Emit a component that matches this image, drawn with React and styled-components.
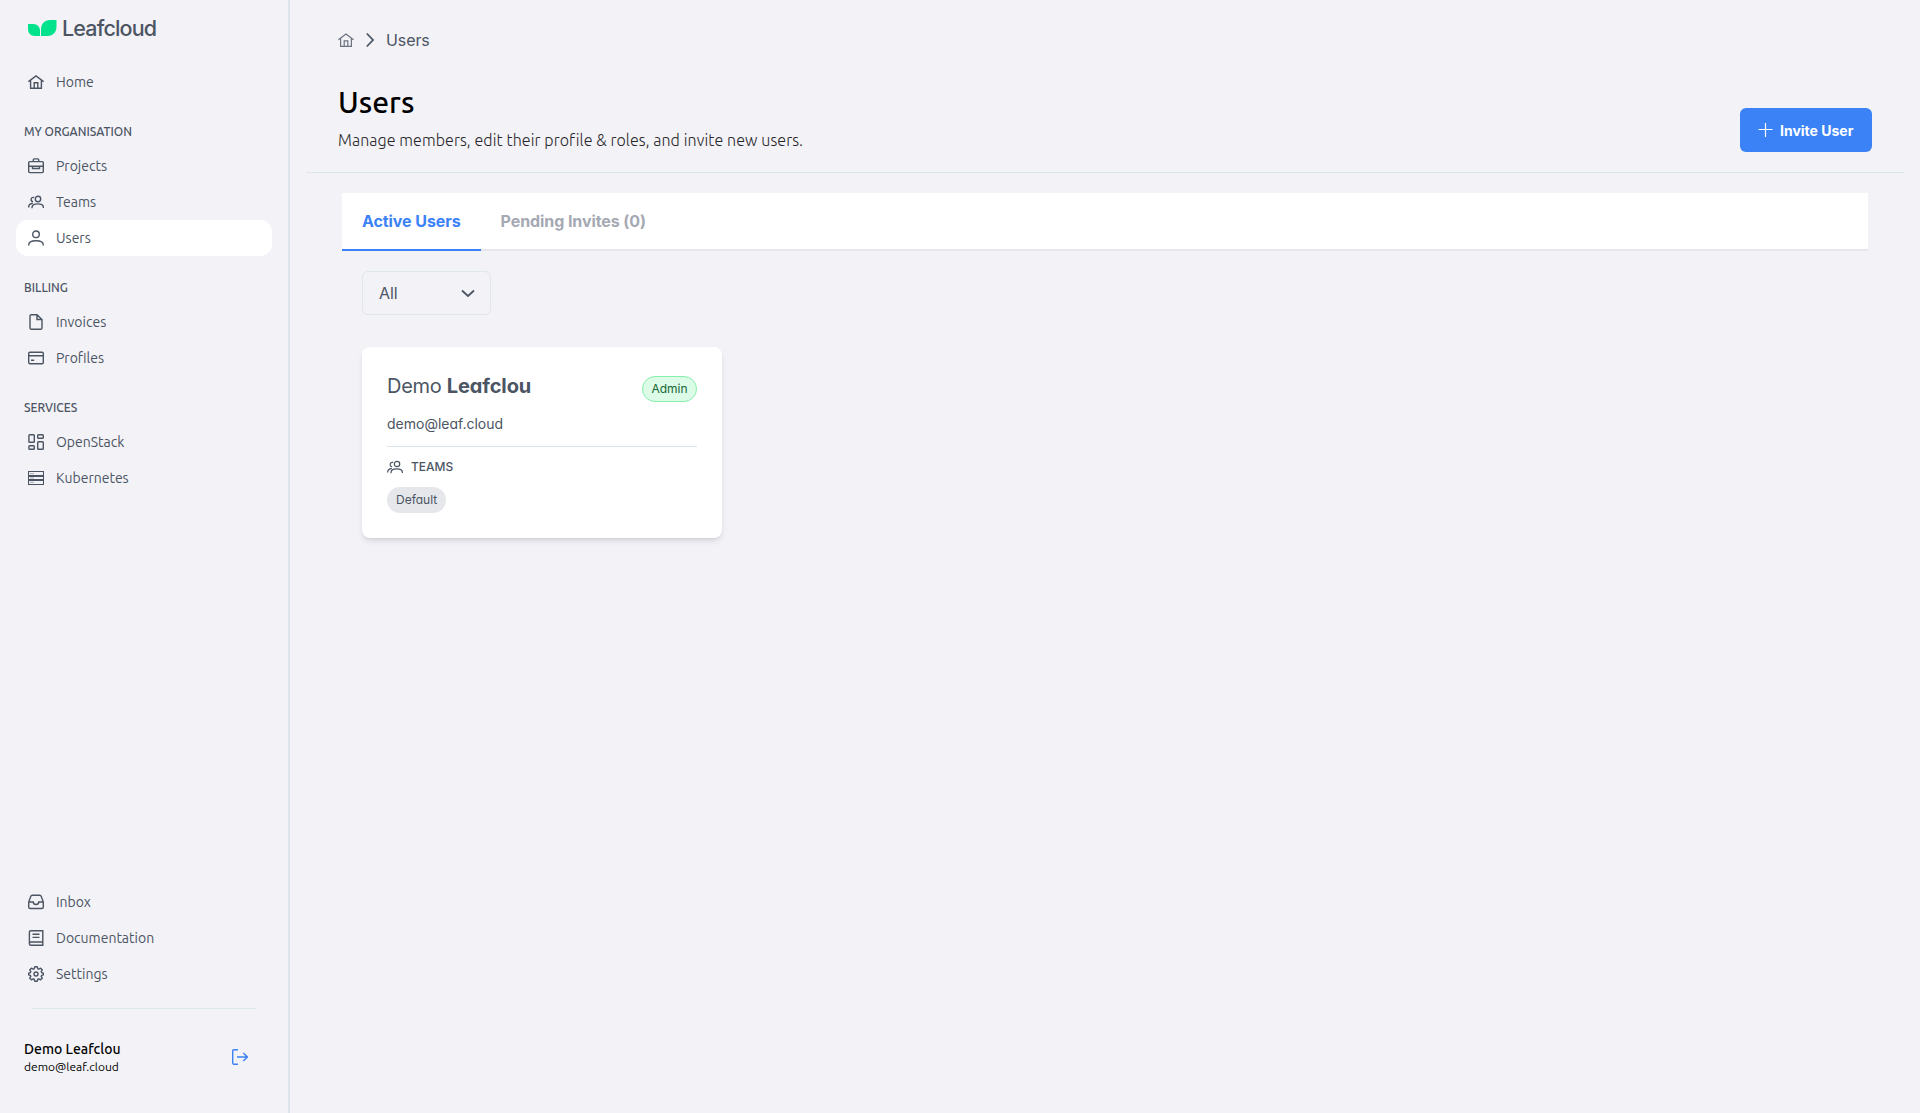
import React from 'react';
import styled, { createGlobalStyle } from 'styled-components';

const Global = createGlobalStyle`
  * { box-sizing: border-box; }
  body { margin: 0; background: #f3f2f7; }
`;

const Svg = styled.svg`
  width: 16px;
  height: 16px;
  flex: none;
  display: block;
  fill: none;
  stroke: ${(p) => p.$color || '#4b5563'};
  stroke-width: ${(p) => p.$weight || 1.4};
`;

const shapes = {
  home: (
    <>
      <path d="M.4 7.7 8 1.9l7.600 5.800M2.600 6.400v7.900h10.800V6.400M6.200 14.300V8.800h3.600v5.500" />
    </>
  ),
  projects: (
    <>
      <rect x=".7" y="3.600" width="14.600" height="11" rx="1" />
      <path d="M5.300 3.500V1.800c0-.6.3-.9.900-.9h3.600c.6 0 .9.300.9.900v1.700M.7 8.200h14.600M4.500 8.200v2.300h7V8.200" />
    </>
  ),
  teams: (
    <>
      <circle cx="10" cy="5" r="2.700" />
      <path d="M4 14.200v-.7c0-2.100 2.200-3.600 5.800-3.600s5.600 1.500 5.600 3.600v.5M6.200 3.500C4.300 3 3.100 4.100 3.100 5.400s.8 2.100 2 2.200M.6 13.500c0-2.500 1-3.800 4.200-4.200" />
    </>
  ),
  user: (
    <>
      <circle cx="8" cy="4.300" r="3.300" />
      <path d="M.8 15.500v-1c0-2.400 2.700-3.800 7.200-3.800s7.200 1.400 7.200 3.800v1" />
    </>
  ),
  file: (
    <>
      <path d="M9 .7H3.400C2.600.7 2 1.300 2 2.100v11.800c0 .8.600 1.400 1.400 1.400h9.200c.8 0 1.400-.6 1.400-1.400V5.500L9 .7v4.800h5" />
    </>
  ),
  card: (
    <>
      <rect x=".7" y="2.300" width="14.600" height="11.400" rx="1.200" />
      <path d="M.7 5.800h14.600M3 10.200h3.200" />
    </>
  ),
  grid: (
    <>
      <rect x=".9" y=".7" width="5.400" height="7.600" rx=".8" />
      <rect x="9.700" y=".7" width="5.600" height="3.600" rx=".8" />
      <rect x=".9" y="11.700" width="5.400" height="3.600" rx=".8" />
      <rect x="9.700" y="7.700" width="5.600" height="7.600" rx=".8" />
    </>
  ),
  server: (
    <>
      <path d="M.5 1.500h15v13H.5z" strokeWidth="1.100" />
      <path d="M.5 6h15M.5 10h15" strokeWidth="2" />
      <path d="M2.500 3.700h1M4.500 3.700h1M2.500 8h1M4.500 8h1M2.500 12.300h1M4.500 12.300h1" strokeWidth=".9" />
    </>
  ),
  inbox: (
    <>
      <path d="M.7 8v5c0 .9.600 1.500 1.500 1.500h11.600c.9 0 1.500-.6 1.500-1.500V8l-2-5.500c-.3-.8-.8-1.200-1.600-1.200H4.300c-.8 0-1.300.4-1.600 1.200L.7 8h4.600c0 1.500 1.100 2.500 2.700 2.500s2.700-1 2.700-2.500h4.600" />
    </>
  ),
  book: (
    <>
      <path d="M14.800 12V.7H3C2 .7 1.400 1.300 1.400 2.200v11.600c0 .9.700 1.500 1.600 1.500h11.800V12H3c-.9 0-1.600.6-1.600 1.500M4.500 4.200h7M4.500 7.400h7" />
    </>
  ),
  settings: (
    <>
      <circle cx="8" cy="8" r="2" />
      <path
        d="M6.700.8h2.600l.5 2 1 .4 1.800-1 1.600 1.600-1 1.800.4 1 1.700.6v1.600l-1.700.6-.4 1 1 1.800-1.600 1.600-1.800-1-1 .4-.5 2H6.700l-.5-2-1-.4-1.800 1-1.600-1.600 1-1.800-.4-1L.7 8.800V7.200l1.700-.6.4-1-1-1.800 1.600-1.600 1.800 1 1-.4z"
        strokeLinejoin="round"
      />
    </>
  ),
  logout: (
    <>
      <path d="M6 .7H2C1.100.7.7 1.200.7 2v12c0 .8.400 1.300 1.300 1.300h4M5 8h10.300M11.300 3.900 15.400 8l-4.100 4.100" />
    </>
  ),
  plus: <path d="M7.500 1v14M.5 7.500h14" />,
  chevronRight: <path d="M4.800 1.500 11 8l-6.200 6.500" />,
  chevronDown: <path d="M2 5.500 8 11l6-5.500" />,
};

const Icon = ({ name, ...rest }) => (
  <Svg viewBox="0 0 16 16" {...rest}>
    {shapes[name]}
  </Svg>
);

const NavItem = ({ icon, label, active }) => (
  <NavRow $active={active}>
    <Icon name={icon} />
    <NavLabel>{label}</NavLabel>
  </NavRow>
);

const sections = [
  {
    title: 'MY ORGANISATION',
    items: [
      { icon: 'projects', label: 'Projects' },
      { icon: 'teams', label: 'Teams' },
      { icon: 'user', label: 'Users', active: true },
    ],
  },
  {
    title: 'BILLING',
    items: [
      { icon: 'file', label: 'Invoices' },
      { icon: 'card', label: 'Profiles' },
    ],
  },
  {
    title: 'SERVICES',
    items: [
      { icon: 'grid', label: 'OpenStack' },
      { icon: 'server', label: 'Kubernetes' },
    ],
  },
];

const App = () => (
  <Page>
    <Global />
    <Sidebar>
      <Brand>
        <Leaf viewBox="0 0 29 16">
          <path d="M0 4h5c4.500 0 7 3 7 7v5H7c-4.500 0-7-3-7-7z" />
          <path d="M13 16V9.500C13 4 16.500 0 22 0h6.500v6.500C28.500 12 25 16 19.500 16z" />
        </Leaf>
        <BrandName>Leafcloud</BrandName>
      </Brand>
      <NavItem icon="home" label="Home" />
      {sections.map((section) => (
        <Section key={section.title}>
          <SectionTitle>{section.title}</SectionTitle>
          {section.items.map((item) => (
            <NavItem key={item.label} {...item} />
          ))}
        </Section>
      ))}
      <Bottom>
        <NavItem icon="inbox" label="Inbox" />
        <NavItem icon="book" label="Documentation" />
        <NavItem icon="settings" label="Settings" />
        <SideRule />
        <Account>
          <div>
            <AccountName>Demo Leafclou</AccountName>
            <AccountMail>demo@leaf.cloud</AccountMail>
          </div>
          <Icon name="logout" $color="#3b82f6" />
        </Account>
      </Bottom>
    </Sidebar>
    <Main>
      <Breadcrumb>
        <Icon name="home" $color="#6b7280" $weight={1.2} />
        <Icon name="chevronRight" $weight={1.8} />
        <Crumb>Users</Crumb>
      </Breadcrumb>
      <Header>
        <div>
          <Title>Users</Title>
          <Subtitle>Manage members, edit their profile &amp; roles, and invite new users.</Subtitle>
        </div>
        <InviteButton>
          <Icon name="plus" $color="#fff" $weight={1.2} />
          Invite User
        </InviteButton>
      </Header>
      <Tabs>
        <Tab $active>Active Users</Tab>
        <Tab>Pending Invites (0)</Tab>
      </Tabs>
      <Content>
        <Select>
          All
          <Icon name="chevronDown" $weight={1.8} />
        </Select>
        <Card>
          <CardTop>
            <Name>
              Demo <b>Leafclou</b>
            </Name>
            <Role>Admin</Role>
          </CardTop>
          <Mail>demo@leaf.cloud</Mail>
          <TeamsHeading>
            <Icon name="teams" $weight={1.2} />
            TEAMS
          </TeamsHeading>
          <Team>Default</Team>
        </Card>
      </Content>
    </Main>
  </Page>
);

export default App;

// Styled Components
const Page = styled.div`
  display: flex;
  height: 1113px;
  font-family: 'Inter', sans-serif;
  color: #4b5563;
`;

const Sidebar = styled.aside`
  display: flex;
  flex-direction: column;
  width: 290px;
  flex: none;
  padding: 0 16px;
  border-right: 2px solid #dce5eb;
  font-family: 'Ubuntu', 'Open Sans', sans-serif;
`;

const Brand = styled.div`
  display: flex;
  align-items: flex-start;
  height: 64px;
  padding: 20px 0 0 12px;
`;

const Leaf = styled.svg`
  width: 29px;
  height: 16px;
  fill: #00e38c;
`;

const BrandName = styled.span`
  margin: -5px 0 0 5px;
  font-family: 'Inter', sans-serif;
  font-size: 21.5px;
  font-weight: 500;
  line-height: 26px;
  letter-spacing: -0.85px;
`;

const NavRow = styled.a`
  display: flex;
  align-items: center;
  gap: 12px;
  height: 36px;
  flex: none;
  padding: 0 12px;
  border-radius: 12px;
  background: ${(p) => (p.$active ? '#fff' : 'transparent')};
`;

const NavLabel = styled.span`
  font-size: 14px;
  line-height: 20px;
`;

const Section = styled.div`
  margin-top: 24px;
`;

const SectionTitle = styled.h3`
  margin: 0;
  padding: 0 8px;
  height: 24px;
  font-size: 12px;
  font-weight: 500;
  line-height: 16px;
`;

const Bottom = styled.div`
  margin-top: auto;
  padding-bottom: 38px;
`;

const SideRule = styled.div`
  height: 1px;
  margin: 16px 16px 0;
  background: #dce9eb;
`;

const Account = styled.div`
  display: flex;
  align-items: center;
  justify-content: space-between;
  padding: 30px 24px 0 8px;
`;

const AccountName = styled.div`
  color: #000;
  font-size: 14px;
  font-weight: 500;
  line-height: 20px;
`;

const AccountMail = styled.div`
  color: #000;
  font-size: 12px;
  line-height: 16px;
`;

const Main = styled.main`
  flex: 1;
  padding: 0 16px;
`;

const Breadcrumb = styled.nav`
  display: flex;
  align-items: center;
  height: 24px;
  margin: 28px 0 0 32px;
  gap: 8px;
`;

const Crumb = styled.span`
  font-size: 16px;
  letter-spacing: -0.1px;
`;

const Header = styled.header`
  display: flex;
  justify-content: space-between;
  height: 121px;
  padding: 28px 32px 0;
  border-bottom: 1px solid #dce5eb;
  font-family: 'Ubuntu', 'Open Sans', sans-serif;
`;

const Title = styled.h1`
  margin: 0;
  color: #000;
  font-size: 30px;
  font-weight: 500;
  line-height: 44px;
`;

const Subtitle = styled.p`
  margin: 4px 0 0;
  color: #27272a;
  font-size: 16px;
  font-weight: 300;
  line-height: 24px;
  letter-spacing: 0.09px;
`;

const InviteButton = styled.button`
  display: flex;
  align-items: center;
  gap: 6px;
  width: 132px;
  height: 44px;
  margin-top: 28px;
  padding: 0 0 0 18px;
  border: 0;
  border-radius: 6px;
  background: #3b82f6;
  color: #fff;
  font-family: 'Inter', sans-serif;
  font-size: 14px;
  font-weight: 700;
`;

const Tabs = styled.div`
  display: flex;
  height: 58px;
  margin: 20px 36px 0;
  background: #fff;
  box-shadow: inset 0 -2px #e5e7eb;
`;

const Tab = styled.button`
  padding: 0 20px;
  border: 0;
  border-bottom: 2px solid ${(p) => (p.$active ? '#3b82f6' : 'transparent')};
  background: transparent;
  color: ${(p) => (p.$active ? '#3b82f6' : '#a5a9b3')};
  font-family: 'Inter', sans-serif;
  font-size: 16px;
  font-weight: 700;
  letter-spacing: -0.08px;
`;

const Content = styled.section`
  padding: 20px 56px;
`;

const Select = styled.div`
  display: flex;
  align-items: center;
  justify-content: space-between;
  width: 129px;
  height: 44px;
  padding: 0 14px 0 16px;
  border: 1px solid #dfe6ec;
  border-radius: 6px;
  font-size: 16px;
  letter-spacing: -0.1px;
`;

const Card = styled.article`
  width: 360px;
  height: 191px;
  margin-top: 32px;
  padding: 24px 25px;
  border-radius: 8px;
  background: #fff;
  box-shadow: 0 4px 6px -1px rgba(0, 0, 0, 0.1), 0 2px 4px -2px rgba(0, 0, 0, 0.1);
  font-feature-settings: 'cv11';
`;

const CardTop = styled.div`
  display: flex;
  justify-content: space-between;
`;

const Name = styled.h2`
  margin: 0;
  font-size: 20px;
  font-weight: 400;
  line-height: 30px;
  letter-spacing: -0.3px;

  b {
    font-weight: 700;
    letter-spacing: -0.1px;
  }
`;

const Role = styled.span`
  width: 55px;
  height: 26px;
  margin-top: 5px;
  border: 1px solid #86efac;
  border-radius: 13px;
  background: #dcfce7;
  color: #166534;
  font-size: 12px;
  line-height: 24px;
  text-align: center;
`;

const Mail = styled.div`
  height: 45px;
  padding-top: 12px;
  border-bottom: 1px solid #dce3eb;
  font-size: 14px;
  line-height: 20px;
`;

const TeamsHeading = styled.div`
  display: flex;
  align-items: center;
  gap: 8px;
  height: 40px;
  padding-bottom: 1px;
  font-size: 12px;
  font-weight: 500;
`;

const Team = styled.span`
  display: inline-block;
  height: 26px;
  padding: 0 9px;
  border-radius: 13px;
  background: #e5e7eb;
  font-size: 12px;
  line-height: 26px;
`;
